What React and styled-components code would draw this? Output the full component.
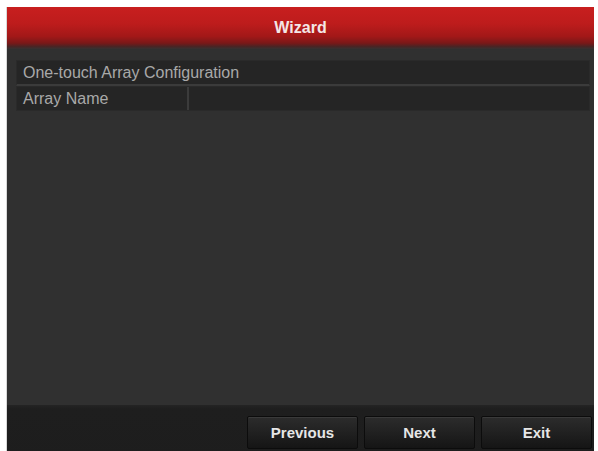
import React from "react";
import styled, { createGlobalStyle } from "styled-components";

const Global = createGlobalStyle`
  html, body { margin: 0; padding: 0; background: #ffffff; overflow: hidden; }
  body { font-family: "Liberation Sans", Arial, sans-serif; }
`;

const Frame = styled.div`
  margin: 7px 4px 0 7px;
  width: 587px;
  height: 460px;
  display: flex;
  flex-direction: column;
  background: #2f2f2f;
  box-shadow: -1px 0 0 #d8d8d8;
`;

const Header = styled.div`
  height: 42px;
  flex: none;
  display: flex;
  align-items: center;
  justify-content: center;
  background: linear-gradient(
    to bottom,
    #c81f1f 0%,
    #bd1c1c 40%,
    #a21818 70%,
    #7a1818 86%,
    #4a2424 94%,
    #363232 100%
  );
`;

const Title = styled.span`
  color: #f4e6e6;
  font-size: 16px;
  font-weight: bold;
  margin-top: -1px;
`;

const Content = styled.div`
  height: 356px;
  flex: none;
  box-sizing: border-box;
  padding: 11px 4px 0 9px;
  display: flex;
  flex-direction: column;
  background: #303030;
`;

const Row = styled.div`
  display: flex;
  height: ${(p) => p.$h}px;
  box-sizing: border-box;
  background: #252525;
  border: 1px solid #2a2a2a;
  border-bottom: ${(p) => (p.$divider ? "2px solid #3b3b3b" : "1px solid #2a2a2a")};
`;

const Cell = styled.div`
  display: flex;
  align-items: center;
  box-sizing: border-box;
  padding-left: 6px;
  color: #a9a9a9;
  font-size: 16px;
  white-space: nowrap;
  width: ${(p) => (p.$w ? `${p.$w}px` : "auto")};
  flex: ${(p) => (p.$w ? "none" : "1")};
  border-right: ${(p) => (p.$sep ? "2px solid #3b3b3b" : "none")};
`;

const Footer = styled.div`
  flex: 1;
  display: flex;
  justify-content: flex-end;
  align-items: flex-start;
  gap: 6px;
  padding: 11px 2px 0 0;
  background: linear-gradient(to bottom, #242424 0px, #1e1e1e 4px, #1d1d1d 100%);
`;

const Button = styled.button`
  width: 111px;
  height: 33px;
  box-sizing: border-box;
  border: 1px solid #0c0c0c;
  border-radius: 2px;
  background: linear-gradient(to bottom, #2c2c2c 0%, #222 45%, #151515 100%);
  box-shadow: inset 0 1px 0 #3a3a3a;
  color: #e6e6e6;
  font-family: "Liberation Sans", Arial, sans-serif;
  font-size: 15px;
  font-weight: bold;
  padding: 0;
  cursor: pointer;
`;

export default function App() {
  return (
    <>
      <Global />
      <Frame>
        <Header>
          <Title>Wizard</Title>
        </Header>
        <Content>
          <Row $h={26} $divider>
            <Cell>One-touch Array Configuration</Cell>
          </Row>
          <Row $h={25}>
            <Cell $w={172} $sep>Array Name</Cell>
            <Cell />
          </Row>
        </Content>
        <Footer>
          <Button>Previous</Button>
          <Button>Next</Button>
          <Button>Exit</Button>
        </Footer>
      </Frame>
    </>
  );
}
